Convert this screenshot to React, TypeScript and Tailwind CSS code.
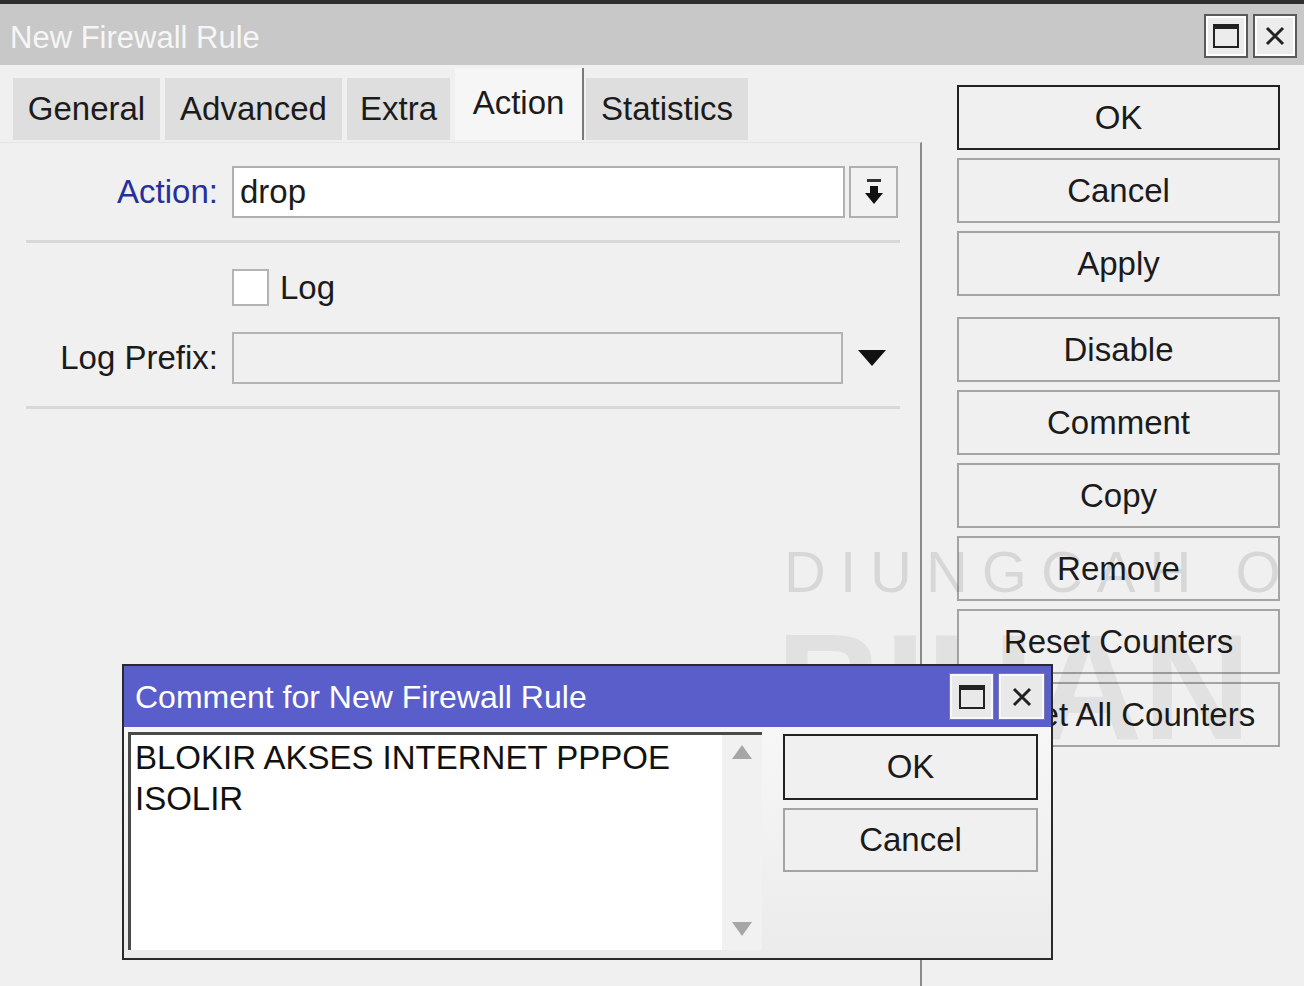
import React from 'react';

const tabs = [
  { label: 'General', w: 'w-[147px]' },
  { label: 'Advanced', w: 'w-[177px]' },
  { label: 'Extra', w: 'w-[103px]' },
];

const buttons = ['OK', 'Cancel', 'Apply'];
const moreButtons = ['Disable', 'Comment', 'Copy', 'Remove', 'Reset Counters', 'Reset All Counters'];

const MaxIcon = () => (
  <svg width="26" height="24" viewBox="0 0 26 24">
    <rect x="1" y="1" width="24" height="22" fill="none" stroke="#222" strokeWidth="2" />
    <rect x="1" y="1" width="24" height="4" fill="#222" />
  </svg>
);

const CloseIcon = () => (
  <svg width="22" height="22" viewBox="0 0 22 22">
    <path d="M3 3 L19 19 M19 3 L3 19" stroke="#222" strokeWidth="3" />
  </svg>
);

const WinButton = ({ children }: { children: React.ReactNode }) => (
  <div className="w-[44px] h-[44px] flex items-center justify-center bg-[#ececec] border-2 border-[#5a5a5a] shadow-[inset_0_0_0_2px_#ffffff]">
    {children}
  </div>
);

const SideButton = ({ label, primary }: { label: string; primary?: boolean }) => (
  <div
    className={
      primary
        ? 'h-[65px] flex items-center justify-center bg-[#f0f0f0] border-2 border-[#222] text-[33px]'
        : 'h-[65px] flex items-center justify-center bg-[#f0f0f0] border-2 border-[#a4a4a4] text-[33px]'
    }
  >
    {label}
  </div>
);

export default function App() {
  return (
    <div className="relative w-[1304px] h-[986px] overflow-hidden bg-[#f0f0f0] text-[#1b1b1b] font-['Liberation_Sans',Arial,sans-serif]">
      <div className="h-[4px] bg-[#2e2e2e]" />
      {/* title bar */}
      <div className="h-[61px] bg-[#c8c8c8] flex items-center justify-between pl-[10px] pr-[7px]">
        <span className="text-[31px] text-[#f6f6f6] pt-[8px]">New Firewall Rule</span>
        <div className="flex gap-[5px] pt-[2px]">
          <WinButton><MaxIcon /></WinButton>
          <WinButton><CloseIcon /></WinButton>
        </div>
      </div>

      <div className="flex">
        {/* left: tabs + form */}
        <div className="w-[922px] flex flex-col h-[921px]">
          <div className="flex items-end gap-[5px] pl-[13px] pt-[3px]">
            {tabs.map((t) => (
              <div key={t.label} className={`${t.w} h-[62px] bg-[#dedede] flex items-center justify-center text-[33px]`}>
                {t.label}
              </div>
            ))}
            <div className="w-[129px] h-[72px] bg-[#f6f6f6] border-r-2 border-[#7a7a7a] flex items-center justify-center text-[33px] pb-[2px]">
              Action
            </div>
            <div className="w-[162px] h-[62px] bg-[#dedede] flex items-center justify-center text-[33px] -ml-[3px]">
              Statistics
            </div>
          </div>

          <div className="flex-1 border-r-2 border-[#8a8a8a] border-t border-t-[#e4e4e4] mt-[2px] pl-[26px] pr-[20px]">
            {/* action row */}
            <div className="flex items-center mt-[23px]">
              <div className="w-[192px] text-right text-[33px] text-[#26309a]">Action:</div>
              <div className="w-[14px]" />
              <div className="w-[613px] h-[52px] bg-white border-2 border-[#b0b0b0] flex items-center pl-[6px] text-[33px]">
                drop
              </div>
              <div className="ml-[4px] w-[49px] h-[52px] bg-[#f2f2f2] border-2 border-[#b0b0b0] flex items-center justify-center">
                <svg width="24" height="28" viewBox="0 0 24 28">
                  <rect x="5" y="1" width="14" height="3" fill="#333" />
                  <path d="M8 8 H16 V15 H21 L12 26 L3 15 H8 Z" fill="#111" />
                </svg>
              </div>
            </div>
            <div className="mt-[22px] h-[3px] bg-[#d8d8d8] w-[874px]" />

            {/* log checkbox */}
            <div className="flex items-center mt-[20px]">
              <div className="w-[206px]" />
              <div className="w-[37px] h-[37px] bg-white border-2 border-[#b4b4b4]" />
              <span className="ml-[11px] text-[33px]">Log</span>
            </div>

            {/* log prefix */}
            <div className="flex items-center mt-[19px]">
              <div className="w-[192px] text-right text-[33px]">Log Prefix:</div>
              <div className="w-[14px]" />
              <div className="w-[611px] h-[52px] bg-[#f0f0f0] border-2 border-[#b4b4b4]" />
              <div className="ml-[15px]">
                <svg width="28" height="16" viewBox="0 0 28 16">
                  <path d="M0 0 H28 L14 16 Z" fill="#111" />
                </svg>
              </div>
            </div>
            <div className="mt-[22px] h-[3px] bg-[#d8d8d8] w-[874px]" />
          </div>
        </div>

        {/* right: buttons */}
        <div className="pl-[35px] pt-[20px] w-[358px]">
          <div className="w-[323px] flex flex-col gap-[8px]">
            {buttons.map((b, i) => (
              <SideButton key={b} label={b} primary={i === 0} />
            ))}
          </div>
          <div className="w-[323px] flex flex-col gap-[8px] mt-[21px]">
            {moreButtons.map((b) => (
              <SideButton key={b} label={b} />
            ))}
          </div>
        </div>
      </div>

      {/* watermark */}
      <div className="pointer-events-none absolute left-[784px] top-[528px] text-[58px] font-light tracking-[14px] text-black/10 whitespace-nowrap">
        DIUNGCAH O
      </div>
      <div className="pointer-events-none absolute left-[776px] top-[612px] text-[150px] font-bold leading-none text-black/[0.06] whitespace-nowrap">
        BIHAN
      </div>

      {/* comment dialog */}
      <div className="absolute left-[122px] top-[664px] w-[931px] h-[296px] border-2 border-[#2a2a2a] bg-[#efefef] flex flex-col">
        <div className="h-[61px] bg-[#5a5ecb] flex items-center justify-between pl-[11px] pr-[7px]">
          <span className="text-[32px] text-white">Comment for New Firewall Rule</span>
          <div className="flex gap-[6px]">
            <div className="w-[43px] h-[45px] flex items-center justify-center bg-[#e9e9e9] border-2 border-[#f8f8f8] shadow-[0_0_0_1px_#7a7ab0]">
              <MaxIcon />
            </div>
            <div className="w-[45px] h-[45px] flex items-center justify-center bg-[#e9e9e9] border-2 border-[#f8f8f8] shadow-[0_0_0_1px_#7a7ab0]">
              <CloseIcon />
            </div>
          </div>
        </div>
        <div className="flex-1 flex pl-[4px] pt-[5px] bg-gradient-to-b from-[#f7f7f7] to-[#ebebeb]">
          <div className="w-[634px] h-[218px] flex border-t-[3px] border-l-[3px] border-[#4a4a4a] bg-white">
            <div className="flex-1 pl-[4px] pt-[2px] text-[33px] leading-[41px] text-[#111]">
              <div>BLOKIR AKSES INTERNET PPPOE</div>
              <div>ISOLIR</div>
            </div>
            <div className="w-[40px] bg-[#f1f1f1] flex flex-col items-center justify-between pt-[10px] pb-[14px]">
              <svg width="20" height="14" viewBox="0 0 20 14">
                <path d="M10 0 L20 14 H0 Z" fill="#a6a6a6" />
              </svg>
              <svg width="20" height="14" viewBox="0 0 20 14">
                <path d="M0 0 H20 L10 14 Z" fill="#a6a6a6" />
              </svg>
            </div>
          </div>
          <div className="ml-[21px] w-[255px] flex flex-col gap-[8px] pt-[2px]">
            <div className="h-[66px] flex items-center justify-center border-2 border-[#222] bg-[#f0f0f0] text-[33px]">OK</div>
            <div className="h-[64px] flex items-center justify-center border-2 border-[#a4a4a4] bg-[#f0f0f0] text-[33px]">Cancel</div>
          </div>
        </div>
      </div>
    </div>
  );
}
